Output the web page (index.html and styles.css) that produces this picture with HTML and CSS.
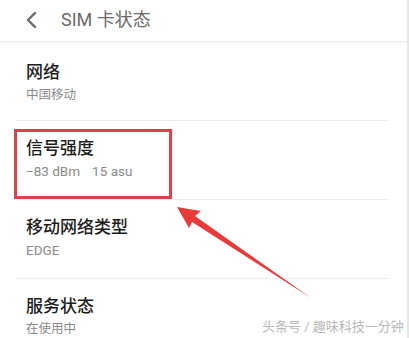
FILE: index.html
```html
<!DOCTYPE html>
<html lang="zh">
<head>
<meta charset="utf-8">
<link rel="stylesheet" href="styles.css">
</head>
<body>
<div class="screen">
  <header class="topbar">
    <svg class="back" width="14" height="18" viewBox="0 0 14 18"><path d="M11 2 L4 9 L11 16" fill="none" stroke="#6a6a6a" stroke-width="2.4" stroke-linecap="round" stroke-linejoin="round"/></svg>
    <h1 class="title">SIM 卡状态</h1>
  </header>
  <ul class="list">
    <li class="item first">
      <div class="item-title">网络</div>
      <div class="item-sub">中国移动</div>
    </li>
    <li class="item">
      <div class="item-title">信号强度</div>
      <div class="item-sub latin"><span class="val">−83 dBm</span><span class="val gap">15 asu</span></div>
    </li>
    <li class="item">
      <div class="item-title">移动网络类型</div>
      <div class="item-sub latin">EDGE</div>
    </li>
    <li class="item last">
      <div class="item-title">服务状态</div>
      <div class="item-sub">在使用中</div>
    </li>
  </ul>
  <div class="highlight"></div>
  <svg class="arrow" width="409" height="338" viewBox="0 0 409 338">
    <polygon points="177,207 201,211 195,216 311,298 192,222 189,228" fill="#ea3b3b"/>
  </svg>
  <div class="watermark">头条号 / 趣味科技一分钟</div>
</div>
</body>
</html>
```
FILE: styles.css
```css
* { box-sizing: border-box; }
html, body { margin: 0; padding: 0; background: #fff; }
body {
  font-family: "Roboto", "Noto Sans CJK SC", sans-serif;
  width: 409px;
  height: 338px;
  overflow: hidden;
}
.screen {
  position: relative;
  width: 409px;
  height: 338px;
  overflow: hidden;
  background: #fff;
  border-right: 2px solid #e6e6e6;
}
.topbar {
  height: 42px;
  display: flex;
  align-items: center;
  padding-left: 24px;
  border-bottom: 1px solid #e9e9e9;
  box-shadow: 0 2px 3px rgba(0,0,0,0.03);
}
.back { display: block; margin-top: -1px; }
.title {
  margin: -2px 0 0 23px;
  font-size: 18px;
  font-weight: 400;
  color: #6a6a6a;
  line-height: 22px;
}
.list {
  list-style: none;
  margin: 0 19px 0 16px;
  padding: 0;
}
.item {
  padding: 15px 0 0 10px;
  border-bottom: 1px solid #ececec;
  height: 79px;
}
.item.first { padding-top: 18px; }
.item.last { border-bottom: none; height: 60px; }
.item-title {
  font-size: 17px;
  line-height: 24px;
  font-weight: 500;
  color: #1c1c1c;
}
.item-sub {
  font-size: 12.5px;
  line-height: 18px;
  margin-top: 2px;
  color: #8a8a8a;
  display: flex;
}
.item-sub.latin { font-size: 13.5px; }
.val.gap { margin-left: 12px; }
.highlight {
  position: absolute;
  left: 14px;
  top: 129px;
  width: 158px;
  height: 70px;
  border: 3px solid #d9434a;
}
.arrow {
  position: absolute;
  left: 0;
  top: 0;
}
.watermark {
  position: absolute;
  left: 262px;
  top: 318px;
  font-size: 13px;
  line-height: 18px;
  color: #b8b8b8;
  white-space: nowrap;
}
```
